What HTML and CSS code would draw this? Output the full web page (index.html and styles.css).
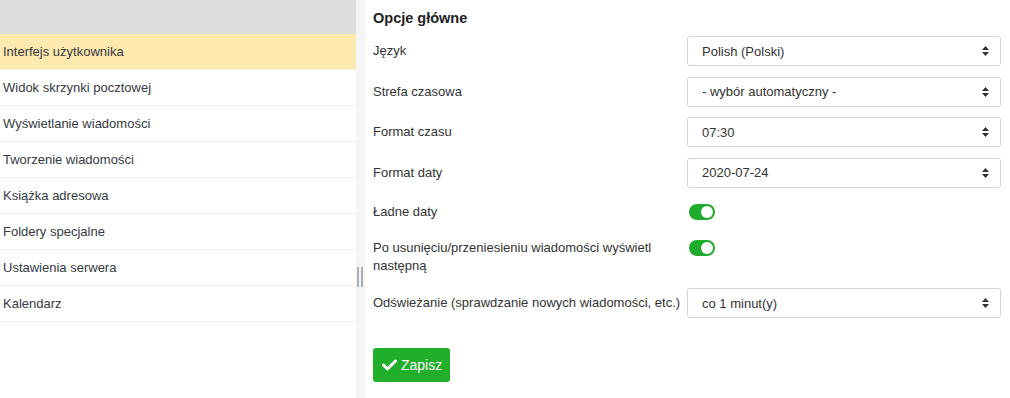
FILE: index.html
```html
<!DOCTYPE html>
<html lang="pl">
<head>
    <meta charset="UTF-8">
    <title>Ustawienia</title>
    <link rel="stylesheet" href="styles.css">
</head>
<body>
    <div class="layout">
        <div class="sidebar">
            <div class="sidebar-head"></div>
            <ul class="section-list">
                <li class="active">Interfejs użytkownika</li>
                <li>Widok skrzynki pocztowej</li>
                <li>Wyświetlanie wiadomości</li>
                <li>Tworzenie wiadomości</li>
                <li>Książka adresowa</li>
                <li>Foldery specjalne</li>
                <li>Ustawienia serwera</li>
                <li>Kalendarz</li>
            </ul>
        </div>

        <div class="splitter"><span class="grip"></span></div>

        <div class="content">
            <h2 class="title">Opcje główne</h2>

            <div class="row">
                <label class="label">Język</label>
                <select class="field"><option>Polish (Polski)</option></select>
            </div>
            <div class="row">
                <label class="label">Strefa czasowa</label>
                <select class="field"><option>- wybór automatyczny -</option></select>
            </div>
            <div class="row">
                <label class="label">Format czasu</label>
                <select class="field"><option>07:30</option></select>
            </div>
            <div class="row">
                <label class="label">Format daty</label>
                <select class="field"><option>2020-07-24</option></select>
            </div>
            <div class="row row-switch">
                <label class="label">Ładne daty</label>
                <span class="switch on"></span>
            </div>
            <div class="row row-switch">
                <label class="label">Po usunięciu/przeniesieniu wiadomości wyświetl następną</label>
                <span class="switch on"></span>
            </div>
            <div class="row">
                <label class="label">Odświeżanie (sprawdzanie nowych wiadomości, etc.)</label>
                <select class="field"><option>co 1 minut(y)</option></select>
            </div>

            <button class="btn-save" type="button">
                <svg width="15" height="12" viewBox="0 0 15 12"><path d="M1.5 6.2 L5.5 10 L13.5 2" fill="none" stroke="#fff" stroke-width="3" stroke-linecap="round" stroke-linejoin="round"/></svg>
                Zapisz
            </button>
        </div>
    </div>
</body>
</html>
```

FILE: styles.css
```css
html, body { margin: 0; padding: 0; background: #fff; }
body { font-family: "Liberation Sans", Arial, sans-serif; font-size: 13px; color: #333; height: 398px; overflow: hidden; }

.layout { display: flex; height: 398px; }

/* left column */
.sidebar { width: 356px; flex-shrink: 0; background: #fff; }
.sidebar-head { height: 34px; background: #ddd; }
.section-list { list-style: none; margin: 0; padding: 0; }
.section-list li { height: 35px; line-height: 35px; padding-left: 3px; border-bottom: 1px solid #efefef; color: #363a42; white-space: nowrap; }
.section-list li.active { background: #fee9ae; }

.splitter { width: 9px; flex-shrink: 0; background: #f4f4f4; display: flex; align-items: flex-start; justify-content: center; }
.grip { margin-top: 267px; margin-right: 2px; width: 2px; height: 20px; border-left: 2px solid #a9b0b8; border-right: 2px solid #a9b0b8; }

/* right panel */
.content { flex: 1; padding: 0 9px 0 8px; }
.title { font-size: 14.5px; font-weight: bold; margin: 10px 0 9px; line-height: 17px; color: #222; }

.row { display: flex; align-items: flex-start; margin-bottom: 10.5px; }
.label { width: 314px; flex-shrink: 0; line-height: 18px; padding-top: 6px; color: #333; }

.field {
    width: 314px; height: 30px; margin: 0; padding: 0 26px 0 14px;
    font-family: inherit; font-size: 13px; color: #333;
    border: 1px solid #ced4da; border-radius: 3px; background-color: #fff;
    -webkit-appearance: none; appearance: none;
    background-image: url("data:image/svg+xml;charset=utf-8,%3Csvg xmlns='http://www.w3.org/2000/svg' width='7' height='10' viewBox='0 0 7 10'%3E%3Cpath fill='%23333' d='M3.5 0L7 4H0zM0 6h7L3.5 10z'/%3E%3C/svg%3E");
    background-repeat: no-repeat; background-position: right 11px center;
}

.row-switch { margin-bottom: 8px; }
.row-switch .label { padding: 5px 0; }
.switch { display: inline-block; position: relative; width: 26px; height: 16px; margin: 6px 0 0 2px; border-radius: 8px; background: #1fab2b; }
.switch::after { content: ""; position: absolute; top: 2px; right: 2px; width: 12px; height: 12px; border-radius: 50%; background: #fff; }

.btn-save {
    display: inline-flex; align-items: center; gap: 4px;
    margin-top: 19px; height: 34px; padding: 0 8px 0 9px;
    font-family: inherit; font-size: 14px; color: #fff;
    background: #20ae2b; border: none; border-radius: 3px;
}
```
